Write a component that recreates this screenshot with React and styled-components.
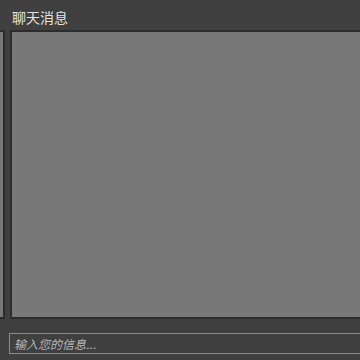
import React from 'react';
import styled, { createGlobalStyle } from 'styled-components';

const GlobalStyle = createGlobalStyle`
    html, body {
        margin: 0;
        padding: 0;
        background: #404040;
        overflow: hidden;
    }
    * { box-sizing: border-box; }
`;

const Page = styled.div`
    width: 360px;
    height: 360px;
    background: #404040;
    display: flex;
    flex-direction: column;
    font-family: "Noto Sans CJK SC", "Noto Sans", sans-serif;
    overflow: hidden;
`;

const Header = styled.div`
    height: 30px;
    padding: 3px 12px 0;
    display: flex;
    align-items: center;
    color: #e4e4e4;
    font-size: 14px;
`;

const Body = styled.div`
    height: 289px;
    display: flex;
    gap: 5px;
    margin-left: -20px;
`;

const Panel = styled.div`
    flex: 0 0 ${p => p.width}px;
    background: #787878;
    border: 2px solid #2c2c2c;
`;

const InputRow = styled.div`
    padding: 11px 0 0 9px;
`;

const Input = styled.input`
    width: 400px;
    height: 21px;
    background: #404040;
    border: 1px solid #8a8a8a;
    padding: 0 4px;
    font-family: "Noto Sans CJK SC", "Noto Sans", sans-serif;
    font-size: 12px;
    font-style: italic;
    color: #ddd;
    outline: none;
    &::placeholder {
        color: #b8b8b8;
        font-style: italic;
    }
`;

const App = () => (
    <Page>
        <GlobalStyle />
        <Header>聊天消息</Header>
        <Body>
            <Panel width={25} />
            <Panel width={400} />
        </Body>
        <InputRow>
            <Input placeholder="输入您的信息..." />
        </InputRow>
    </Page>
);

export default App;
